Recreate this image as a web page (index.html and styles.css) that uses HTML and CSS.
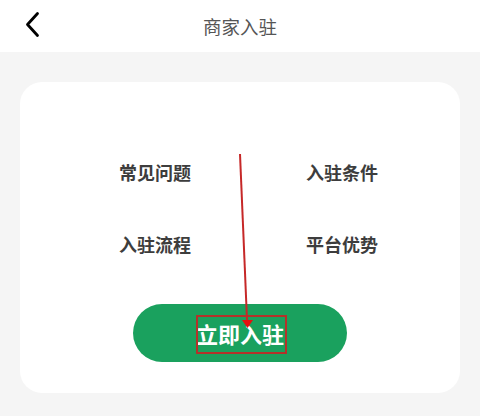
FILE: index.html
```html
<!DOCTYPE html>
<html lang="zh">
<head>
<meta charset="utf-8">
<title>商家入驻</title>
<link rel="stylesheet" href="styles.css">
</head>
<body>
<div class="page">
  <header class="topbar">
    <svg class="back" width="16" height="28" viewBox="0 0 16 28">
      <path d="M12.5 2.5 L2.5 13.5 L12.5 24.5" fill="none" stroke="#000" stroke-width="2.8" stroke-linecap="round" stroke-linejoin="round"/>
    </svg>
    <h1 class="title">商家入驻</h1>
  </header>
  <main class="card">
    <div class="links">
      <div class="link">常见问题</div>
      <div class="link">入驻条件</div>
      <div class="link">入驻流程</div>
      <div class="link">平台优势</div>
    </div>
    <div class="btn-wrap">
      <button class="join">立即入驻</button>
    </div>
  </main>
  <div class="mark-box"></div>
  <svg class="arrow" width="480" height="416" viewBox="0 0 480 416">
    <line x1="240" y1="154" x2="247" y2="320" stroke="#c62828" stroke-width="2"/>
    <polygon points="242,320 253,320 247.5,328" fill="#e41010"/>
  </svg>
</div>
</body>
</html>
```
FILE: styles.css
```css
html, body {
  margin: 0;
  padding: 0;
}
body {
  background: #f5f5f5;
  font-family: "Noto Sans CJK SC", "Noto Sans", sans-serif;
  width: 480px;
  height: 416px;
  overflow: hidden;
}
.page {
  position: relative;
  width: 480px;
  height: 416px;
}
.topbar {
  height: 52px;
  background: #fff;
  position: relative;
  display: flex;
  align-items: center;
  justify-content: center;
}
.back {
  position: absolute;
  left: 25px;
  top: 11px;
}
.title {
  margin: 0;
  font-size: 18.5px;
  font-weight: 400;
  color: #555;
  line-height: 24px;
}
.card {
  margin: 30px 20px 0;
  height: 311px;
  background: #fff;
  border-radius: 22px;
  box-sizing: border-box;
  padding-top: 78px;
}
.links {
  display: grid;
  grid-template-columns: 187px 1fr;
  row-gap: 48px;
  padding-left: 99px;
}
.link {
  font-size: 18px;
  font-weight: 700;
  line-height: 24px;
  color: #3d3d3d;
}
.btn-wrap {
  display: flex;
  justify-content: center;
  margin-top: 48px;
}
.join {
  width: 214px;
  height: 58px;
  border: none;
  border-radius: 29px;
  background: #1aa15e;
  color: #fff;
  font-family: inherit;
  font-size: 22px;
  font-weight: 700;
  padding: 0;
  line-height: 58px;
}
.mark-box {
  position: absolute;
  left: 196px;
  top: 315px;
  width: 87px;
  height: 35px;
  border: 2px solid #b3322a;
}
.arrow {
  position: absolute;
  left: 0;
  top: 0;
  pointer-events: none;
}
```
